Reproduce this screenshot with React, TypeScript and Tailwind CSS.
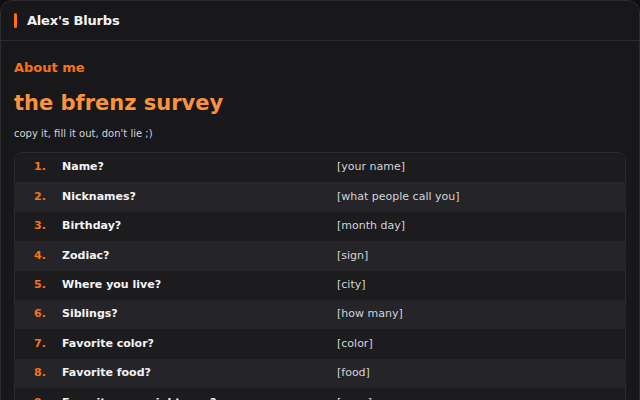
import React from "react";

const rows: [string, string][] = [
  ["Name?", "[your name]"],
  ["Nicknames?", "[what people call you]"],
  ["Birthday?", "[month day]"],
  ["Zodiac?", "[sign]"],
  ["Where you live?", "[city]"],
  ["Siblings?", "[how many]"],
  ["Favorite color?", "[color]"],
  ["Favorite food?", "[food]"],
  ["Favorite song right now?", "[song]"],
  ["Pets?", "[pets]"],
];

export default function App() {
  return (
    <div
      className="w-[640px] h-[400px] overflow-hidden bg-[#0f0f11]"
      style={{ fontFamily: '"DejaVu Sans", sans-serif' }}
    >
      <div className="h-[420px] bg-[#18181b] border border-[#2c2c30] rounded-t-[12px]">
        <div className="h-[40px] flex items-center gap-[10px] pl-[13px] border-b border-[#2c2c30]">
          <span className="w-[3px] h-[15px] rounded-full bg-[#f97316]" />
          <span className="text-[13px] font-bold text-[#f4f4f5] tracking-[-0.2px]">Alex's Blurbs</span>
        </div>
        <div className="px-[13px] pt-[18px]">
          <div className="text-[13px] font-bold text-[#f97316] leading-[18px]">About me</div>
          <h1 className="mt-[11px] text-[21px] font-bold text-[#fb923c] leading-[30px]">the bfrenz survey</h1>
          <p className="mt-[9px] text-[10px] text-[#d4d4d8] leading-[14px]">copy it, fill it out, don't lie ;)</p>
          <div className="mt-[11px] w-[612px] rounded-[8px] border border-[#2a2a2e] overflow-hidden">
            {rows.map(([q, a], i) => (
              <div
                key={i}
                className={
                  "flex items-center h-[29.4px] text-[11px] " +
                  (i % 2 === 0 ? "bg-[#1c1c1f]" : "bg-[#252529]")
                }
              >
                <span className="w-[47px] pl-[19px] font-bold text-[#f97316]">{i + 1}.</span>
                <span className="w-[275px] font-bold text-[#f4f4f5]">{q}</span>
                <span className="text-[#d4d4d8]">{a}</span>
              </div>
            ))}
          </div>
        </div>
      </div>
    </div>
  );
}
